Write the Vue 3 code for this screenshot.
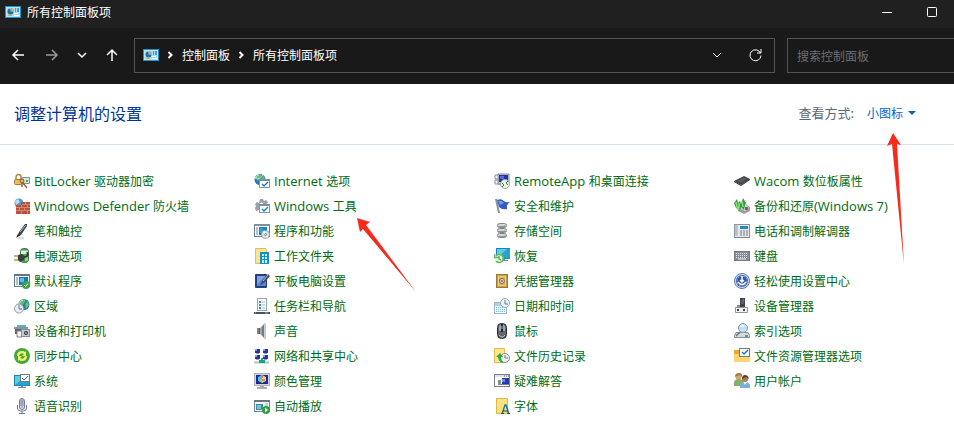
<script setup>
import { ref } from 'vue'

const view = ref('小图标')
const query = ref('')

const globe = '<circle cx="9" cy="6.500" r="5.500" fill="#2478bd"/><path d="M5 3l4-2 2 2-2 2-2 3-2-2zM10 6l3-3 1 4-3 4z" fill="#6fbd63"/><path d="M4 6q1-4 4-4" stroke="#b8e5fa" fill="none"/>'
const panel = '<rect x=".5" y="2.500" width="15" height="11" fill="#b9e7fa" stroke="#1d95cb"/><rect x="2" y="4" width="12" height="8" fill="#a5dcf3"/><path d="M5.500 4.500a3 3 0 1 0 3 3h-3z" fill="#1770ac"/><path d="M6 4v3h3a3 3 0 0 0-3-3" fill="#f3a12c"/><path d="M10 5h1M12 5h2M10 7h1M12 7h2" stroke="#135685"/><path d="M3 11.500h4" stroke="#f7a51b"/><path d="M9 11.500h5M9 9.500h4" stroke="#fff"/>'
const monitor = '<path d="M0 2h16v11H0z" fill="#1687bd"/><path d="M1 3h14v9H1z" fill="#2ba3d2"/><path d="M1 12l10-9H1z" fill="#5fcde0"/><path d="M7 13h2v1h3v1H4v-1h3z" fill="#718491"/>'
const check = '<rect x="5.500" y="6.500" width="10" height="8" fill="#fff" stroke="#8796a2"/><path d="M5 6h11v2H5z" fill="#78909f"/><path d="M8 11l2 2 4-4" fill="none" stroke="#1684cd" stroke-width="1.500"/>'

const items = [
  { latin: 'BitLocker ', text: '驱动器加密', icon: '<path d="M2 7V4a2.500 2.500 0 0 1 5 0v3" stroke="#b08a3c" stroke-width="1.500" fill="none"/><rect x=".5" y="6.500" width="7" height="5" rx="1" fill="#eec04f" stroke="#a8772a"/><path d="M8 4.500h7.500v6H9z" fill="#dfe3e4" stroke="#8a9193"/><path d="M12 8h2" stroke="#44ac48" stroke-width="2"/><circle cx="8" cy="8" r="2" fill="#e2b97e" stroke="#875129"/><path d="M9 10l4 5M8 10v4" stroke="#9a6136" stroke-width="1.500"/>' },
  { latin: 'Windows Defender ', text: '防火墙', icon: '<circle cx="5" cy="5" r="4.500" fill="#519bcd"/><path d="M1 3l3-2 2 3-4 3z" fill="#b6e1f0"/><path d="M2 7h5V4h9v12H2z" fill="#b9523d"/><path d="M2 9.500h14M2 12.500h14M8 6.500h8" stroke="#dda08c" stroke-width=".7"/><path d="M11.500 4v2M7.500 7v2M13.500 7v2M5.500 10v2M10.500 10v2M7.500 13v3M13.500 13v3" stroke="#dda08c" stroke-width=".7"/>' },
  { text: '笔和触控', icon: '<path d="M3 14l2-5 6-8h2v2l-6 9z" fill="#384654"/><path d="M6 9l6-7" stroke="#a9b7c2"/><path d="M2 15l2-4 2 1z" fill="#222"/><path d="M4 15h6" stroke="#b5b5b5"/>' },
  { text: '电源选项', icon: '<rect x="6.500" y=".5" width="8" height="14" rx="3" fill="#3da648" stroke="#4b6e51"/><path d="M7 2.500h7V6H7z" fill="#dcece1"/><path d="M11 9h3v4h-3z" fill="#86d874"/><path d="M0 8h5M0 12h5" stroke="#bd9b43" stroke-width="1.500"/><path d="M4 7l4-1 3 3-1 3-4 2-2-2z" fill="#3a3f3f"/><path d="M10 9q5 0 3-5" stroke="#333" stroke-width="1.500" fill="none"/>' },
  { text: '默认程序', icon: '<rect x=".5" y="1.500" width="15" height="12" fill="#f6f8f9" stroke="#697887"/><path d="M0 1h16v2H0z" fill="#69747d"/><path d="M2 5h2M2 7h2M2 9h2M2 11h2" stroke="#5f8aaa"/><path d="M5 4h9v8H5z" fill="#1479b8"/><path d="M6 5h4v4H6z" fill="#58c1e2"/><circle cx="12" cy="12" r="4" fill="#38a447"/><path d="M10 12l1.500 1.500L14 10.500" stroke="#fff" fill="none"/>' },
  { text: '区域', icon: '<g transform="translate(1 0)">' + globe + '</g><circle cx="5" cy="10.500" r="4.500" fill="#e7eff4" stroke="#8b9daa"/><path d="M5 7v4h3" stroke="#5e7280" fill="none"/>' },
  { text: '设备和打印机', icon: '<path d="M1 5h11v6H1z" fill="#60666b"/><path d="M3 2h9v4H3z" fill="#49b6ce"/><path d="M0 4h14v2H0z" fill="#8b9499"/><path d="M3 8h5v6H3z" fill="#f5f6f6" stroke="#808487"/><rect x="7.500" y="6.500" width="8" height="7" fill="#c4cacd" stroke="#8a8f93"/><circle cx="12" cy="10" r="2" fill="#333"/><circle cx="12" cy="10" r="1" fill="#79bbcf"/>' },
  { text: '同步中心', icon: '<circle cx="8" cy="8" r="8" fill="#48a83e"/><path d="M3 8q0-5 5-5 2 0 3 1l1-1v5H8l2-2q-4-2-5 2zM13 8q0 5-5 5-2 0-3-1l-1 1V8h4l-2 2q4 2 5-2z" fill="#f1f16a"/>' },
  { text: '系统', icon: monitor + '<rect x="6.500" y="1.500" width="9" height="7" fill="#fff" stroke="#6d7982"/><path d="M8 5l2 2 4-4" stroke="#2379c2" fill="none"/>' },
  { text: '语音识别', icon: '<rect x="5.500" y=".5" width="5" height="11" rx="2.500" fill="#dadde8" stroke="#737696"/><path d="M6 3h4M6 5h4M6 7h4M8 1v9" stroke="#898da8"/><path d="M3.500 7v3q0 3 3 3h3q3 0 3-3V7M8 13v2M5 15.500h6" fill="none" stroke="#717493"/>' },

  { latin: 'Internet ', text: '选项', icon: '<g transform="translate(-3 0)">' + globe + '</g><path d="M1 4q5 4 8-2" fill="none" stroke="#bfe3f5"/>' + check },
  { latin: 'Windows ', text: '工具', icon: '<path d="M6 1h3l1 2 2-1 2 2-1 2 2 1v3l-2 1-3 3H6l-1-2-3 1-1-3 1-2-1-2 2-2 2 1z" fill="#9aa1a7"/><circle cx="7.500" cy="6.500" r="2" fill="#fff"/>' + check },
  { text: '程序和功能', icon: '<rect x=".5" y="1.500" width="15" height="12" fill="#fff" stroke="#687987"/><path d="M0 1h16v2H0z" fill="#81909b"/><path d="M2 5h2M2 7h2M2 9h2M2 11h2" stroke="#4c91b9"/><path d="M5 4h8v8H5z" fill="#1785bd"/><path d="M6 5h3v5H6z" fill="#3d9fd0"/><circle cx="11.500" cy="11.500" r="4" fill="#d7e0e5" stroke="#9aa8b0"/><path d="M11.500 11.500l-2-3M11.500 11.500l2 3" stroke="#fff" stroke-width="1.500"/><circle cx="11.500" cy="11.500" r="1" fill="#fff" stroke="#8497a0"/>' },
  { text: '工作文件夹', icon: '<path d="M1.500.5h10l1 2v13h-11z" fill="#ffe394" stroke="#dfbd58"/><path d="M6 4h9v12H6z" fill="#188dc8"/><path d="M8 6h2v2H8zm3 0h2v2h-2zM8 9h2v2H8zm3 0h2v2h-2zM8 12h2v3H8zm3 0h2v3h-2z" fill="#c5effb"/>' },
  { text: '平板电脑设置', icon: '<rect x="1" y="1" width="12" height="14" rx="1" fill="#263d80"/><path d="M3 3h9v10H3z" fill="#5585d7"/><path d="M3 12l8-9H3z" fill="#77a5e7"/><path d="M6 12l2-4 6-7 2 2-6 7z" fill="#454b50"/><path d="M9 8l5-6" stroke="#b5bcc1"/>' },
  { text: '任务栏和导航', icon: '<rect x="3.500" y=".5" width="9" height="12" fill="#f6f8fa" stroke="#99a6b0"/><path d="M5 3h2v2H5zM5 6h2v2H5zM5 9h2v2H5z" fill="#2591cd"/><path d="M8 4h3M8 7h3M8 10h3" stroke="#b4c0c8"/><path d="M0 14h16v2H0z" fill="#49545c"/><path d="M1 15h1M11 15h3" stroke="#aeb7bd"/>' },
  { text: '声音', icon: '<path d="M3 5h3v6H3z" fill="#555c63"/><path d="M6 5l5-5v16l-5-5z" fill="#9ea6ac"/><path d="M8 4l3-4v16l-3-4z" fill="#737b82"/><path d="M11 0v16" stroke="#c8cdd1" stroke-width="2" fill="none"/><path d="M4 5v6" stroke="#adb3b7"/>' },
  { text: '网络和共享中心', icon: '<path d="M1 1h5v4H1zM9 1h5v4H9zM1 7h5v4H1zM9 7h5v4H9z" fill="#2835a0"/><path d="M1 1h2v2H1zM9 1h2v2H9zM1 7h2v2H1zM9 7h2v2H9z" fill="#8fa0ec"/><path d="M2 5.500h3M10 5.500h3M2 11.500h3M10 11.500h3" stroke="#9b9fa5"/><path d="M0 14.500h15" stroke="#b3c4be" stroke-width="2"/><path d="M7 10h2v2h2v3H5v-3h2z" fill="#17aa80"/>' },
  { text: '颜色管理', icon: '<rect x=".5" y=".5" width="15" height="12" fill="#d3d6da" stroke="#adb1b6"/><path d="M2 2h12v9H2z" fill="#1c279c"/><path d="M4 4l4-2v8l-4-2z" fill="#47c5df"/><path d="M8 2l4 2v4l-4 2z" fill="#f0e05a"/><path d="M6 6h2v3H6z" fill="#7bdc58"/><path d="M8 6h3v2H8z" fill="#e776b0"/><path d="M7 2h2v3H7z" fill="#ed7654"/><path d="M6 13h4v1h3v2H3v-2h3z" fill="#a9adb2"/>' },
  { text: '自动播放', icon: '<rect x=".5" y="2.500" width="15" height="11" fill="#f6f7f8" stroke="#77838c"/><path d="M0 2h16v2H0z" fill="#687781"/><path d="M2 6h7v6H2z" fill="#378db4"/><path d="M3 7h4v4H3z" fill="#7fc1be"/><path d="M11 6h3M11 8h3" stroke="#a4b0b8"/><circle cx="12" cy="12" r="4" fill="#2da23d"/><path d="M11 9.500l3 2.500-3 2.500z" fill="#fff"/>' },

  { latin: 'RemoteApp ', text: '和桌面连接', icon: '<path d="M1 2h5v4H1zM1 7h5v4H1z" fill="#fff" stroke="#858ca4"/><path d="M4 1h11v10H4z" fill="#c8cddd" stroke="#7e849e"/><path d="M5 2h9v7H5z" fill="#2435a6"/><path d="M6 3h4v3H6z" fill="#5369d7"/><circle cx="11" cy="11" r="4.500" fill="#edf1ee" stroke="#9eaaa1"/><path d="M8 10l2 2-2 2M14 8l-2 2 2 2" stroke="#28953b" fill="none"/>' },
  { text: '安全和维护', icon: '<path d="M1 1h2l3 14H4z" fill="#858fa7"/><path d="M3 2q4-2 7 1 2 2 6 1l-3 3v4q-5 1-8-2z" fill="#365cc1"/><path d="M4 3q4-1 6 2l-4 2z" fill="#7098e2"/>' },
  { text: '存储空间', icon: '<g fill="#d3d5d8" stroke="#83878b"><rect x="3.500" y=".5" width="9" height="4" rx="2"/><rect x="3.500" y="5.500" width="9" height="4" rx="2"/><rect x="3.500" y="10.500" width="9" height="4" rx="2"/></g><path d="M4 3.500h8M4 8.500h8M4 13.500h8" stroke="#909498"/><path d="M10 3h1M10 8h1M10 13h1" stroke="#58bc42"/>' },
  { text: '恢复', icon: '<g transform="translate(2 -2)">' + monitor + '</g><circle cx="5" cy="10.500" r="4.500" fill="#edf5ef"/><path d="M2 8a4 4 0 1 1 0 5M.5 6v3.500h4M5 8v3l2 1" fill="none" stroke="#5cb85f" stroke-width="1.500"/>' },
  { text: '凭据管理器', icon: '<rect x="2.500" y="1.500" width="11" height="13" fill="#c99b42" stroke="#a07a35"/><rect x="4.500" y="3.500" width="7" height="9" fill="#d7b25f" stroke="#ecd08a"/><circle cx="8" cy="8" r="2.500" fill="#e4d4a9" stroke="#7e7359"/><circle cx="8" cy="8" r="1" fill="#777"/>' },
  { text: '日期和时间', icon: '<rect x=".5" y="4.500" width="12" height="11" fill="#f6fbfd" stroke="#9cb6c6"/><path d="M1 5h11v3H1z" fill="#b8cedb"/><path d="M2 9.500h9M2 11.500h9M2 13.500h9" stroke="#65bbd8" stroke-dasharray="1 1"/><circle cx="11" cy="5" r="4.500" fill="#edf4f7" stroke="#9aabb7"/><path d="M11 2v4h3" stroke="#647987" fill="none"/>' },
  { text: '鼠标', icon: '<rect x="3.500" y=".5" width="9" height="15" rx="4" fill="#60666d" stroke="#292d32"/><path d="M5 3q3-4 6 0v5H5z" fill="#9ba6b1"/><path d="M8 1v8" stroke="#1f2733" stroke-width="2"/><path d="M8 3v3" stroke="#81bfdf"/><path d="M5 12q3 4 6 0" stroke="#bac0c5" fill="none"/>' },
  { text: '文件历史记录', icon: '<path d="M.5.5h10v14H.5z" fill="#ffe58e" stroke="#dfbd4c"/><circle cx="11" cy="10" r="4.500" fill="#eef1ee" stroke="#899198"/><path d="M11 7v3h3" stroke="#707980" fill="none"/><path d="M2 9l4-4 3 4H7q0 4 3 6-5 0-6-6z" fill="#2cac42"/>' },
  { text: '疑难解答', icon: '<rect x=".5" y="1.500" width="15" height="12" fill="#fff" stroke="#777f91"/><path d="M1 2h14v2H1z" fill="#dfe2e9"/><path d="M10 3h1M12 3h1M14 3h1" stroke="#57627b"/><path d="M8 5h7v6H8z" fill="#2638a8"/><path d="M8 6h3v3H8z" fill="#718bde"/><path d="M4 7h3v5H4z" fill="#8b9097"/><path d="M5 8v2" stroke="#45a44c"/><path d="M7 11h8v1H7z" fill="#737b8d"/>' },
  { text: '字体', icon: '<path d="M2.500.5h11v15h-11z" fill="#ffe07e" stroke="#e1b746"/><path d="M8 16l3-9h1l3 9" fill="none" stroke="#207b99" stroke-width="1.500"/><path d="M9 13h5M7 15.500h3M13 15.500h3" stroke="#174f73"/>' },

  { latin: 'Wacom ', text: '数位板属性', icon: '<path d="M0 8l10-5 6 3-9 6z" fill="#43474b"/><path d="M3 8l7-4 3 2-6 4z" fill="#555b60"/><path d="M0 8l7 4 9-6v1l-9 6-7-4z" fill="#202326"/>' },
  { text: '备份和还原', tail: '(Windows 7)', icon: '<path d="M4 10l6-5 6 4v4l-6 3-6-3z" fill="#9ba0a1"/><path d="M5 10l6-5 4 5-4 3z" fill="#d7d9d8"/><path d="M11 9h3v3h-3z" fill="#a5564c"/><path d="M0 5l3-4 1 4 2-2 1 3 2-6 3 5-1 2-1 5-3-3-1 4-4-3z" fill="#2f9f43"/><path d="M2 4l1 5 2 3M5 5v5M8 3l1 6" fill="none" stroke="#8fdf76" stroke-width="1.500"/>' },
  { text: '电话和调制解调器', icon: '<rect x=".5" y="1.500" width="15" height="13" fill="#e6e9ec" stroke="#8995a0"/><rect x="1" y="2" width="3" height="11" rx="1" fill="#bcc4cb"/><path d="M6 3h8v3H6z" fill="#278bb6"/><path d="M6 8h8M6 10h8M6 12h8" stroke="#697782" stroke-dasharray="2 1"/><path d="M0 14h16v1H0z" fill="#76828d"/>' },
  { text: '键盘', icon: '<rect x=".5" y="3.500" width="15" height="9" fill="#858c95" stroke="#747b84"/><path d="M2 5.500h12M2 7.500h12M2 9.500h12" stroke="#e3e6ea" stroke-dasharray="1 1"/><path d="M4 11h8" stroke="#edf0f2"/>' },
  { text: '轻松使用设置中心', icon: '<circle cx="8" cy="8" r="7.500" fill="#d3dcf0" stroke="#5f74b0"/><circle cx="8" cy="8" r="6" fill="#2c52a8"/><circle cx="8" cy="8" r="5" fill="none" stroke="#9cb8e6" stroke-dasharray="2 1"/><path d="M8 3v6M6 7l2 2 2-2M4 9q4 5 8 0" fill="none" stroke="#fff" stroke-width="1.500"/>' },
  { text: '设备管理器', icon: '<path d="M6 0h5v10H6z" fill="#40464a"/><path d="M7 3h3M7 5h3" stroke="#70797e"/><path d="M9 2h1" stroke="#50ca63"/><path d="M1.500 9.500h12v5h-12z" fill="#f1f2f3" stroke="#8f969b"/><path d="M3 7h3v3H3z" fill="#838b90"/><path d="M3 11h2v2H3zM9 11h2v2H9z" fill="#40474b"/>' },
  { text: '索引选项', icon: '<path d="M2 9.500h12l1.500 3v2H.5v-2z" fill="#d4d9df" stroke="#858e98"/><path d="M11 12h3v2h-3z" fill="#48b252"/><circle cx="9" cy="5" r="4.500" fill="#c2e2f3" stroke="#8b96a7"/><path d="M7 4q1-2 3-1" fill="none" stroke="#fff" stroke-width="1.500"/><path d="M6 9l-4 4" stroke="#626e81" stroke-width="1.500"/>' },
  { text: '文件资源管理器选项', icon: '<path d="M0 2h6l1 2h9v10H0z" fill="#e9a92e"/><path d="M0 6h16v8H0z" fill="#ffd66d"/><rect x="5.500" y=".5" width="10" height="8" fill="#fff" stroke="#687b89"/><path d="M8 4l2 2 4-4" fill="none" stroke="#1679cf" stroke-width="1.500"/>' },
  { text: '用户帐户', icon: '<circle cx="4.500" cy="4" r="3" fill="#d9a26c"/><path d="M1 4q0-4 4-4t3 4L6 2 3 3z" fill="#a57b48"/><path d="M0 13V9q1-3 5-3t5 3v4z" fill="#84b068"/><circle cx="11" cy="6" r="3" fill="#b2774b"/><path d="M8 6q0-4 3-4t4 4l-3-2z" fill="#54433c"/><path d="M6 15v-3q1-3 5-3t5 3v3z" fill="#79aede"/><path d="M9 9l2 3 2-3" fill="#e5f0f8"/>' }
]
</script>

<template>
  <div class="window">
    <header class="titlebar">
      <svg class="icon" viewBox="0 0 16 16" aria-hidden="true" v-html="panel"></svg>
      <span class="title">所有控制面板项</span>
      <button class="caption" aria-label="最小化">
        <svg viewBox="0 0 12 12"><path d="M1 6.500h10" /></svg>
      </button>
      <button class="caption" aria-label="最大化">
        <svg viewBox="0 0 12 12"><rect x="1.500" y="1.500" width="9" height="9" rx="1" /></svg>
      </button>
    </header>

    <nav class="toolbar">
      <div class="history">
        <button aria-label="后退"><svg viewBox="0 0 16 16"><path d="M14 8H3M8 3L3 8l5 5" /></svg></button>
        <button aria-label="前进" disabled><svg viewBox="0 0 16 16"><path d="M2 8h11M8 3l5 5-5 5" /></svg></button>
        <button aria-label="最近浏览的位置"><svg viewBox="0 0 16 16"><path d="M4 6l4 4 4-4" /></svg></button>
        <button aria-label="上移"><svg viewBox="0 0 16 16"><path d="M8 14V3M3 8l5-5 5 5" /></svg></button>
      </div>
      <div class="address">
        <svg class="icon" viewBox="0 0 16 16" aria-hidden="true" v-html="panel"></svg>
        <svg class="crumb" viewBox="0 0 8 10" aria-hidden="true"><path d="M2.500 2l3 3-3 3" /></svg>
        <a href="#">控制面板</a>
        <svg class="crumb" viewBox="0 0 8 10" aria-hidden="true"><path d="M2.500 2l3 3-3 3" /></svg>
        <a href="#">所有控制面板项</a>
        <button class="expand" aria-label="以前的位置"><svg viewBox="0 0 16 16"><path d="M4 6l4 4 4-4" /></svg></button>
        <button aria-label="刷新"><svg viewBox="0 0 16 16"><path d="M13.500 6A5.500 5.500 0 1 0 14 8.500M14 2v4h-4" /></svg></button>
      </div>
      <input v-model="query" class="search" type="text" placeholder="搜索控制面板" aria-label="搜索控制面板" />
    </nav>

    <main>
      <div class="heading">
        <h1>调整计算机的设置</h1>
        <label for="view">查看方式:</label>
        <div class="picker">
          <select id="view" v-model="view">
            <option>类别</option>
            <option>大图标</option>
            <option>小图标</option>
          </select>
          <svg viewBox="0 0 8 4" aria-hidden="true"><path d="M0 0h8L4 4z" /></svg>
        </div>
      </div>

      <div class="items">
        <a v-for="item in items" :key="item.text + (item.latin || '')" href="#">
          <svg class="icon" viewBox="0 0 16 16" aria-hidden="true" v-html="item.icon"></svg>
          <span><span v-if="item.latin" class="latin">{{ item.latin }}</span>{{ item.text }}<span v-if="item.tail" class="latin">{{ item.tail }}</span></span>
        </a>
      </div>
    </main>

    <svg class="pointer tools" viewBox="0 0 60 75" aria-hidden="true"><path d="M0 0l13 4-4 3 50 67L6 11l-3 3z" /></svg>
    <svg class="pointer viewing" viewBox="0 0 18 132" aria-hidden="true"><path d="M6 0l8 12-4-1 7 121L5 11l-5 2z" /></svg>
  </div>
</template>

<style>
body {
  margin: 0;
  background: #fff;
}
</style>

<style scoped>
.window {
  position: relative;
  overflow: hidden;
  font: 12px/16px "Noto Sans CJK SC", sans-serif;
}

button {
  display: flex;
  align-items: center;
  justify-content: center;
  padding: 0;
  border: 0;
  background: none;
  color: #fff;
}

button svg {
  width: 16px;
  height: 16px;
  fill: none;
  stroke: currentColor;
  stroke-width: 1.5;
}

a {
  color: inherit;
  text-decoration: none;
}

.icon {
  flex: none;
  width: 16px;
  height: 16px;
}

.titlebar {
  box-sizing: border-box;
  display: flex;
  align-items: center;
  height: 28px;
  padding: 0 0 4px 5px;
  background: #202020;
  color: #fff;
}

.titlebar .icon {
  margin-right: 6px;
}

.title {
  flex: 1;
}

.caption {
  width: 45px;
  height: 24px;
}

.caption svg {
  width: 12px;
  height: 12px;
  stroke-width: 1;
}

.toolbar {
  box-sizing: border-box;
  display: flex;
  align-items: center;
  height: 56px;
  padding-bottom: 2px;
  background: #191919;
  color: #fff;
}

.history {
  display: flex;
  gap: 14px;
  padding: 0 14px 0 10px;
}

.history button {
  width: 16px;
  height: 24px;
}

.history button:nth-child(2) {
  margin-left: 4px;
}

.history button:disabled {
  color: #9a9a9a;
}

.address {
  box-sizing: border-box;
  display: flex;
  flex: 1;
  align-items: center;
  height: 35px;
  padding: 0 11px 0 8px;
  border: 1px solid #535353;
}

.crumb {
  width: 8px;
  height: 10px;
  margin: 0 8px 0 7px;
  fill: none;
  stroke: #fff;
  stroke-width: 2;
}

.address button {
  width: 16px;
  margin-left: 22px;
}

.address .expand {
  margin-left: auto;
}

.address button svg {
  stroke-width: 1;
}

.search {
  box-sizing: border-box;
  width: 167px;
  height: 35px;
  margin-left: 12px;
  padding: 0 9px;
  border: 1px solid #535353;
  border-right: 0;
  border-radius: 0;
  background: #191919;
  color: #fff;
  font: inherit;
}

.search::placeholder {
  color: #6d6d6d;
  opacity: 1;
}

.heading {
  box-sizing: border-box;
  display: flex;
  align-items: center;
  height: 61px;
  padding: 0 38px 2px 14px;
  border-bottom: 1px solid #d6e2ee;
}

h1 {
  flex: 1;
  margin: 0;
  color: #039;
  font-size: 16px;
  font-weight: 400;
  line-height: 24px;
}

label {
  margin-right: 13px;
  color: #5a6777;
  font-size: 13px;
}

.picker {
  display: flex;
  align-items: center;
  gap: 4px;
}

.picker svg {
  width: 8px;
  height: 4px;
  fill: #0066b4;
}

select {
  padding: 0;
  border: 0;
  appearance: none;
  background: none;
  color: #0066cc;
  font: inherit;
}

.items {
  display: grid;
  grid-template-rows: repeat(10, 25px);
  grid-template-columns: repeat(3, 240px) 1fr;
  grid-auto-flow: column;
  padding: 23px 0 24px 14px;
  color: #006b12;
}

.items a {
  display: flex;
  align-items: center;
  gap: 4px;
  white-space: pre;
}

.latin {
  font-family: "Open Sans", sans-serif;
  font-size: 13px;
}

.pointer {
  position: absolute;
  fill: #f72a1c;
  pointer-events: none;
}

.tools {
  top: 218px;
  left: 357px;
  width: 60px;
  height: 75px;
}

.viewing {
  top: 133px;
  left: 887px;
  width: 18px;
  height: 132px;
}
</style>
